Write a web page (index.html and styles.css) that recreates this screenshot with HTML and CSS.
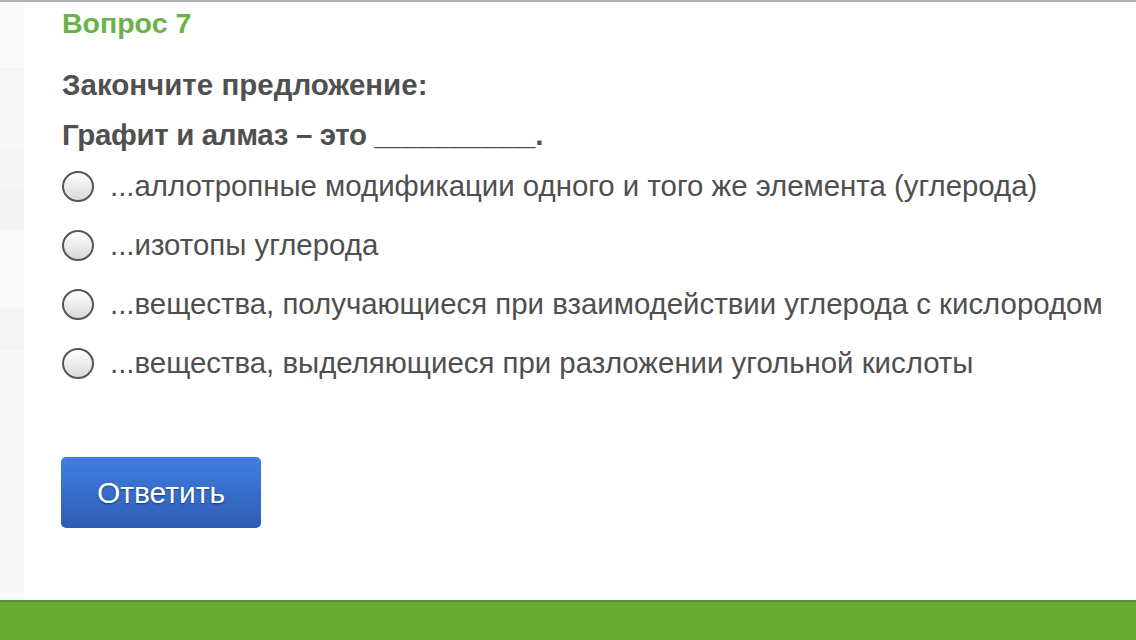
FILE: index.html
```html
<!DOCTYPE html>
<html lang="ru">
<head>
<meta charset="utf-8">
<link rel="stylesheet" href="styles.css">
</head>
<body>
<div class="page">
  <div class="side">
    <div class="seg s1"></div>
    <div class="seg s2"></div>
    <div class="seg s3"></div>
    <div class="seg s4"></div>
    <div class="seg s5"></div>
    <div class="seg s6"></div>
    <div class="seg s7"></div>
  </div>
  <main class="content">
    <h2 class="qtitle">Вопрос 7</h2>
    <p class="qtext">Закончите предложение:</p>
    <p class="qtext second">Графит и алмаз – это __________.</p>
    <ul class="options">
      <li class="option"><span class="radio"></span><span class="label">...аллотропные модификации одного и того же элемента (углерода)</span></li>
      <li class="option"><span class="radio"></span><span class="label">...изотопы углерода</span></li>
      <li class="option"><span class="radio"></span><span class="label">...вещества, получающиеся при взаимодействии углерода с кислородом</span></li>
      <li class="option"><span class="radio"></span><span class="label">...вещества, выделяющиеся при разложении угольной кислоты</span></li>
    </ul>
    <button class="submit">Ответить</button>
  </main>
</div>
<footer class="footer"></footer>
</body>
</html>
```

FILE: styles.css
```css
* { box-sizing: border-box; }
html, body { margin: 0; padding: 0; }
body {
  width: 1136px;
  height: 640px;
  overflow: hidden;
  background: #fff;
  font-family: "Liberation Sans", Arial, sans-serif;
  display: flex;
  flex-direction: column;
}
.page {
  height: 600px;
  display: flex;
  border-top: 2px solid #b0b0b0;
}
.side {
  width: 25px;
  display: flex;
  flex-direction: column;
  background: #f8f8f8;
  border-right: 1px solid #fcfcfc;
}
.seg { border-bottom: 1px solid #f3f3f3; }
.s1 { height: 68px; background: #f9f9f9; }
.s2 { height: 82px; background: #f7f7f7; }
.s3 { height: 38px; background: #f5f5f5; }
.s4 { height: 40px; background: #f3f3f3; }
.s5 { height: 80px; background: #f9f9f9; }
.s6 { height: 40px; background: #f4f4f4; }
.s7 { flex: 1; background: #f8f8f8; }
.content {
  flex: 1;
  padding: 6px 0 0 37px;
}
.qtitle {
  margin: 0;
  color: #6ab24a;
  font-size: 28.5px;
  font-weight: bold;
  line-height: 30px;
}
.qtext {
  margin: 0;
  color: #505050;
  font-size: 29.5px;
  font-weight: bold;
  line-height: 30px;
}
.qtext:first-of-type { margin-top: 32px; }
.second { margin-top: 20px; letter-spacing: -0.35px; }
.options {
  list-style: none;
  margin: 21px 0 0;
  padding: 0;
  display: flex;
  flex-direction: column;
  gap: 29px;
}
.option {
  display: flex;
  align-items: center;
  height: 30px;
}
.radio {
  width: 32px;
  height: 31px;
  border: 2px solid #555;
  border-radius: 50%;
  background: linear-gradient(#ffffff, #d8d8d8);
  margin-right: 16px;
  flex: none;
}
.label {
  color: #4f4f4f;
  font-size: 29.4px;
  line-height: 30px;
  white-space: nowrap;
}
.submit {
  margin-top: 79px;
  width: 200px;
  height: 71px;
  border: none;
  border-radius: 5px;
  background: linear-gradient(#3f7ee2, #2e5db3);
  color: #fff;
  font-family: "Liberation Sans", Arial, sans-serif;
  font-size: 30px;
  text-shadow: 0 1px 2px rgba(0,0,0,0.45);
  margin-left: -1px;
  padding: 0;
}
.footer {
  height: 40px;
  background: #66aa30;
  border-top: 2px solid #5a8c3c;
}
```
